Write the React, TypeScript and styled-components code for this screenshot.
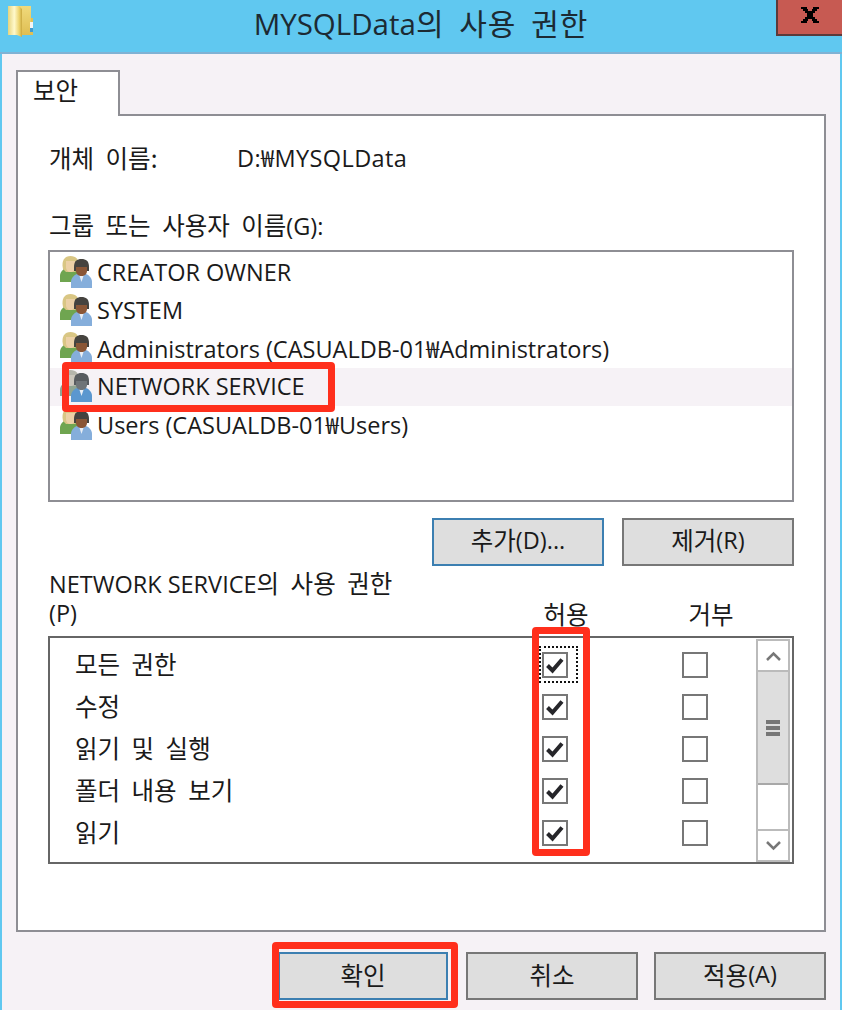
import styled, { createGlobalStyle } from "styled-components";

const users = [
    { name: "CREATOR OWNER" },
    { name: "SYSTEM" },
    { name: "Administrators (CASUALDB-01₩Administrators)" },
    { name: "NETWORK SERVICE", service: true },
    { name: "Users (CASUALDB-01₩Users)" },
];

const permissions = ["모든 권한", "수정", "읽기 및 실행", "폴더 내용 보기", "읽기"];

function FolderIcon() {
    return (
        <svg width="25" height="31" viewBox="0 0 25 31">
            <defs>
                <linearGradient id="folderFace" x1="0" x2="1" y1="0" y2="0">
                    <stop offset="0" stopColor="#e6d47e" />
                    <stop offset="0.45" stopColor="#fff9cc" />
                    <stop offset="0.8" stopColor="#ecd36c" />
                    <stop offset="1" stopColor="#c9a83f" />
                </linearGradient>
                <linearGradient id="folderBack" x1="0" x2="0" y1="0" y2="1">
                    <stop offset="0" stopColor="#f0da7c" />
                    <stop offset="1" stopColor="#dfbe52" />
                </linearGradient>
            </defs>
            <path d="M10 0h13v29H10z" fill="url(#folderBack)" />
            <path d="M23 12h2v17h-2z" fill="#e0c055" />
            <rect x="22" y="16" width="3" height="6" fill="#f4f4f4" />
            <rect x="22" y="22" width="3" height="4" fill="#3f9bd0" />
            <path d="M0 0h11l3 3v28l-5-2H0z" fill="url(#folderFace)" />
        </svg>
    );
}

function UserIcon({ service }: { service?: boolean }) {
    return (
        <svg width="32" height="32" viewBox="0 0 32 32">
            <path d="M0 26v-6c0-4 3-7 6-8h7c3 1 5 4 5 8v6z" fill={service ? "#8fa592" : "#6fa550"} />
            <path d="M3 13C1 4 5 0 10.500 0S20 3 18 13l-3 3H6z" fill={service ? "#b5b5ab" : "#d9c684"} />
            <path d="M6 5h9v6c0 3-2 5-4.500 5S6 14 6 11z" fill={service ? "#cbc6bc" : "#ecd0a6"} />
            <path d="M11 32v-6c0-4 3-7 6-8h9c3 1 6 4 6 8v6z" fill={service ? "#5b97cf" : "#85aedb"} />
            <path d="M21.500 19l-3-2 3 9 3-9z" fill="#e8eef5" />
            <path d="M14 11c0-6 3-8 7.500-8S29 5 29 11v4H14z" fill={service ? "#585c60" : "#45433f"} />
            <path d="M16 11h11v4c0 3-2.500 5-5.500 5S16 18 16 15z" fill={service ? "#6f7478" : "#8a5636"} />
        </svg>
    );
}

function Tick() {
    return (
        <svg width="22" height="22" viewBox="0 0 22 22">
            <path d="M3.500 11.500l5 5L18 5.500" fill="none" stroke="#26262a" strokeWidth="4" />
        </svg>
    );
}

function App() {
    return (
        <Window>
            <GlobalStyle />
            <TitleBar>
                <TitleIcon><FolderIcon /></TitleIcon>
                <Title>MYSQLData<TitleKo>의 사용 권한</TitleKo></Title>
                <TitleEnd>
                    <CloseButton>
                        <svg width="18" height="16" viewBox="0 0 18 16">
                            <path d="M0 0h6v2h1v2h4V2h1V0h6v2h-2v2h-2v2h-2v4h2v2h2v2h2v2h-6v-2h-1v-2H7v2H6v2H0v-2h2v-2h2v-2h2V6H4V4H2V2H0z" fill="#000" />
                        </svg>
                    </CloseButton>
                </TitleEnd>
            </TitleBar>
            <Body>
                <TabStrip><Tab><Ko>보안</Ko></Tab></TabStrip>
                <Panel>
                    <ObjectRow>
                        <ObjectLabel><Ko>개체 이름:</Ko></ObjectLabel>
                        <ObjectPath>D:₩MYSQLData</ObjectPath>
                    </ObjectRow>
                    <GroupLabel><Ko>그룹 또는 사용자 이름</Ko>(G):</GroupLabel>
                    <UserList>
                        {users.map((u) => (
                            <UserRow key={u.name} $selected={u.service}>
                                <UserIcon service={u.service} />
                                <span>{u.name}</span>
                                {u.service && <UserMark />}
                            </UserRow>
                        ))}
                    </UserList>
                    <ListActions>
                        <ActionButton $focused><Ko>추가</Ko>(D)...</ActionButton>
                        <ActionButton><Ko>제거</Ko>(R)</ActionButton>
                    </ListActions>
                    <PermHeader>
                        <PermLabel>NETWORK SERVICE<Ko>의 사용 권한</Ko><br />(P)</PermLabel>
                        <ColumnName $col={2}><Ko>허용</Ko></ColumnName>
                        <ColumnName $col={4}><Ko>거부</Ko></ColumnName>
                    </PermHeader>
                    <PermBox>
                        <PermRows>
                            {permissions.map((p, i) => (
                                <PermRow key={p}>
                                    <PermName><Ko>{p}</Ko></PermName>
                                    <CheckBox>
                                        <Tick />
                                        {i === 0 && <FocusRing />}
                                    </CheckBox>
                                    <CheckBox />
                                </PermRow>
                            ))}
                        </PermRows>
                        <ScrollBar>
                            <ScrollButton>
                                <svg width="15" height="10" viewBox="0 0 15 10">
                                    <path d="M1 9l6.500-6.500L14 9" fill="none" stroke="#777" strokeWidth="2.500" />
                                </svg>
                            </ScrollButton>
                            <ScrollThumb>
                                <Grip /><Grip /><Grip />
                            </ScrollThumb>
                            <ScrollTrack />
                            <ScrollButton>
                                <svg width="15" height="10" viewBox="0 0 15 10">
                                    <path d="M1 1l6.500 6.500L14 1" fill="none" stroke="#777" strokeWidth="2.500" />
                                </svg>
                            </ScrollButton>
                        </ScrollBar>
                        <AllowMark />
                    </PermBox>
                </Panel>
                <Footer>
                    <OkButton>
                        <Ko>확인</Ko>
                        <OkMark />
                    </OkButton>
                    <FooterButton><Ko>취소</Ko></FooterButton>
                    <FooterButton><Ko>적용</Ko>(A)</FooterButton>
                </Footer>
            </Body>
        </Window>
    );
}

const GlobalStyle = createGlobalStyle`
    html, body {
        margin: 0;
        padding: 0;
        background: #f6f2f6;
    }
    * {
        box-sizing: border-box;
    }
`;

const Window = styled.div`
    display: flex;
    flex-direction: column;
    width: 842px;
    height: 1010px;
    overflow: hidden;
    font-family: "Open Sans", "Noto Sans CJK KR", sans-serif;
    font-size: 23.5px;
    color: #1a1a1a;
    background: #f6f2f6;
`;

const Ko = styled.span`
    font-family: "Noto Sans CJK KR", sans-serif;
    font-size: 24.5px;
    word-spacing: 6px;
`;

const TitleBar = styled.div`
    display: grid;
    grid-template-columns: 1fr auto 1fr;
    height: 54px;
    flex-shrink: 0;
    background: #60c8f0;
    border-bottom: 2px solid #7fb2d4;
`;

const TitleIcon = styled.div`
    padding: 6px 0 0 8px;
`;

const Title = styled.div`
    height: 44px;
    font-size: 29.5px;
    line-height: 44px;
    color: #1c2a33;
`;

const TitleKo = styled.span`
    font-family: "Noto Sans CJK KR", sans-serif;
    font-size: 30px;
    letter-spacing: 1px;
    word-spacing: 7px;
`;

const TitleEnd = styled.div`
    display: flex;
    justify-content: flex-end;
`;

const CloseButton = styled.div`
    display: flex;
    align-items: center;
    justify-content: center;
    width: 66px;
    height: 36px;
    padding-bottom: 4px;
    background: #c75a52;
    border-left: 2px solid #5c3a3a;
    border-bottom: 2px solid #5c3a3a;
`;

const Body = styled.div`
    flex: 1;
    display: flex;
    flex-direction: column;
    padding: 16px 14px 0 14px;
    border-left: 2px solid #60c8f0;
    border-right: 2px solid #60c8f0;
`;

const TabStrip = styled.div`
    display: flex;
    margin-bottom: -2px;
    position: relative;
    z-index: 1;
`;

const Tab = styled.div`
    width: 104px;
    height: 46px;
    padding: 0 0 0 15px;
    line-height: 36px;
    background: #fff;
    border: 2px solid #8e8e94;
    border-bottom: none;
`;

const Panel = styled.div`
    display: flex;
    flex-direction: column;
    height: 818px;
    padding: 27px 30px 0 30px;
    background: #fff;
    border: 2px solid #8e8e94;
`;

const ObjectRow = styled.div`
    display: flex;
    padding-left: 1px;
    line-height: 30px;
    height: 30px;
`;

const ObjectLabel = styled.span`
    width: 188px;
`;

const ObjectPath = styled.span`
    letter-spacing: 0.4px;
`;

const GroupLabel = styled.div`
    height: 30px;
    margin: 37px 0 10px 1px;
    line-height: 30px;
`;

const UserList = styled.div`
    height: 252px;
    padding-top: 2px;
    border: 2px solid #8e8e94;
`;

const UserRow = styled.div<{ $selected?: boolean }>`
    position: relative;
    display: flex;
    align-items: center;
    gap: 5px;
    height: 38px;
    padding: 0 0 3px 10px;
    background: ${(p) => (p.$selected ? "#f6f2f6" : "#fff")};
`;

const Annotation = styled.div`
    position: absolute;
    z-index: 2;
    border: 7px solid #ff2f1c;
    border-radius: 4px;
    pointer-events: none;
`;

const UserMark = styled(Annotation)`
    left: 12px;
    top: -6px;
    width: 273px;
    height: 50px;
`;

const ListActions = styled.div`
    display: flex;
    justify-content: flex-end;
    gap: 18px;
    margin-top: 16px;
`;

const ActionButton = styled.div<{ $focused?: boolean }>`
    display: flex;
    align-items: center;
    justify-content: center;
    width: 172px;
    height: 48px;
    padding-bottom: 5px;
    background: #dedede;
    border: 2px solid ${(p) => (p.$focused ? "#3c7fb1" : "#777")};
`;

const PermHeader = styled.div`
    display: grid;
    grid-template-columns: 484px 68px 64px 94px;
    height: 58px;
    margin-top: 2px;
`;

const PermLabel = styled.div`
    padding-left: 1px;
    line-height: 29px;
    white-space: nowrap;
`;

const ColumnName = styled.div<{ $col: number }>`
    grid-column: ${(p) => p.$col};
    grid-row: 1;
    align-self: end;
    text-align: center;
    line-height: 29px;
    height: 29px;
`;

const PermBox = styled.div`
    position: relative;
    display: flex;
    justify-content: space-between;
    height: 228px;
    margin-top: 10px;
    padding: 0 2px 0 0;
    border: 2px solid #666;
`;

const PermRows = styled.div`
    padding-top: 5px;
`;

const PermRow = styled.div`
    display: grid;
    grid-template-columns: 467px 140px 26px;
    align-items: center;
    height: 42px;
    padding-left: 25px;
`;

const PermName = styled.span`
    line-height: 42px;
`;

const CheckBox = styled.div`
    position: relative;
    display: flex;
    align-items: center;
    justify-content: center;
    width: 26px;
    height: 26px;
    border: 2px solid #777;
`;

const FocusRing = styled.div`
    position: absolute;
    left: -5px;
    top: -8px;
    width: 39px;
    height: 37px;
    border: 2px dotted #111;
`;

const AllowMark = styled(Annotation)`
    left: 482px;
    top: -11px;
    width: 58px;
    height: 229px;
`;

const ScrollBar = styled.div`
    display: flex;
    flex-direction: column;
    width: 34px;
    margin-top: 1px;
    border: solid #bbb;
    border-width: 0 2px;
`;

const ScrollButton = styled.div`
    display: flex;
    align-items: center;
    justify-content: center;
    height: 33px;
    flex-shrink: 0;
    background: #fff;
    border: solid #bbb;
    border-width: 2px 0;
`;

const ScrollThumb = styled.div`
    display: flex;
    flex-direction: column;
    align-items: center;
    justify-content: center;
    gap: 2px;
    height: 113px;
    flex-shrink: 0;
    background: #dedede;
    border: solid #a8a8a8;
    border-width: 0 0 2px;
`;

const Grip = styled.div`
    width: 14px;
    height: 4px;
    background: #777;
`;

const ScrollTrack = styled.div`
    flex: 1;
    background: #fff;
`;

const Footer = styled.div`
    display: flex;
    justify-content: flex-end;
    gap: 16px;
    margin-top: 20px;
`;

const FooterButton = styled.div`
    display: flex;
    align-items: center;
    justify-content: center;
    width: 172px;
    height: 48px;
    padding-bottom: 4px;
    background: #dedede;
    border: 2px solid #777;
`;

const OkButton = styled(FooterButton)`
    position: relative;
    width: 170px;
    margin-right: 2px;
    border-color: #3c7fb1;
`;

const OkMark = styled(Annotation)`
    left: -8px;
    top: -12px;
    width: 186px;
    height: 66px;
`;

export default App
